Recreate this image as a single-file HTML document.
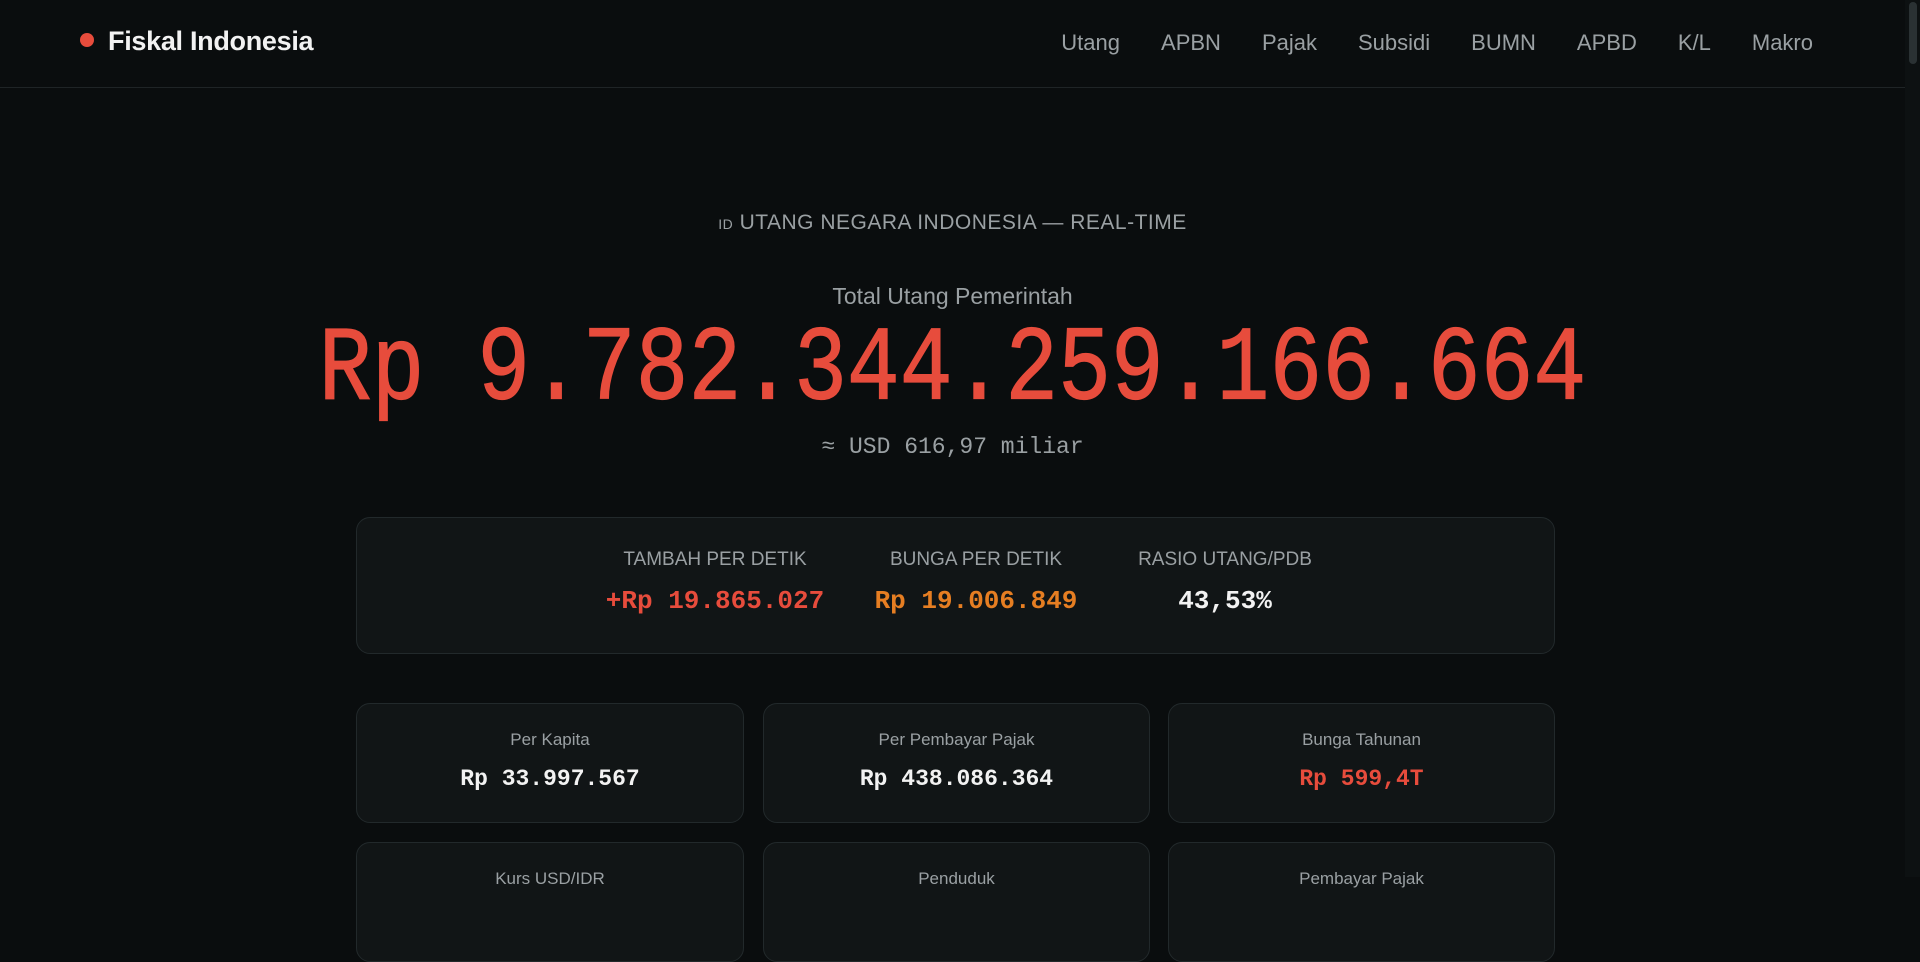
<!DOCTYPE html>
<html><head><meta charset="utf-8"><style>
*{margin:0;padding:0;box-sizing:border-box}
body{width:1920px;height:877px;overflow:hidden;background:#0a0d0e;font-family:"Liberation Sans",sans-serif;color:#e6e6e6;position:relative}
.nav{position:absolute;left:0;top:0;width:1905px;height:88px;border-bottom:1px solid #1f2426}
.logo{position:absolute;left:80px;top:26px;font-size:27px;font-weight:bold;color:#f2f2f2;letter-spacing:-0.3px}
.logo:before{content:"";display:inline-block;width:14px;height:14px;border-radius:50%;background:#e74c3c;margin-right:14px;vertical-align:3px}
.menu{position:absolute;right:92px;top:30px;font-size:22px;color:#9aa0a3}
.menu span{margin-left:41px}
.sb{position:absolute;right:0;top:0;width:15px;height:877px;background:#0d1112}
.sb div{position:absolute;left:4px;top:2px;width:8px;height:62px;border-radius:4px;background:#2a3133}
.c{position:absolute;left:0;width:1905px;text-align:center}
.mono{font-family:"Liberation Mono",monospace}
.box{position:absolute;background:#111516;border:1px solid #22292b;border-radius:14px}
.lab{position:absolute;text-align:center;font-size:19px;color:#9aa0a3}
.val{position:absolute;text-align:center;font-family:"Liberation Mono",monospace;font-weight:bold;font-size:26px}
</style></head><body>
<div class="nav"><div class="logo">Fiskal Indonesia</div>
<div class="menu"><span>Utang</span><span>APBN</span><span>Pajak</span><span>Subsidi</span><span>BUMN</span><span>APBD</span><span>K/L</span><span>Makro</span></div></div>
<div class="sb"><div></div></div>
<div class="c" style="top:211px;font-size:21px;color:#9aa0a3;letter-spacing:0.5px"><span style="font-size:14px">ID</span> UTANG NEGARA INDONESIA — REAL-TIME</div>
<div class="c" style="top:283px;font-size:23px;color:#9aa0a3">Total Utang Pemerintah</div>
<div class="c mono" style="top:322px;font-size:88px;line-height:100px;color:#e74c3c;transform:scaleY(1.2);-webkit-text-stroke:1px #e74c3c">Rp 9.782.344.259.166.664</div>
<div class="c mono" style="top:434px;font-size:23px;color:#9aa0a3">≈ USD 616,97 miliar</div>
<div class="box" style="left:356px;top:517px;width:1199px;height:137px"></div>
<div class="lab" style="left:595px;width:240px;top:549px">TAMBAH PER DETIK</div>
<div class="lab" style="left:856px;width:240px;top:549px">BUNGA PER DETIK</div>
<div class="lab" style="left:1105px;width:240px;top:549px">RASIO UTANG/PDB</div>
<div class="val" style="left:565px;width:300px;top:586px;color:#e74c3c">+Rp 19.865.027</div>
<div class="val" style="left:836px;width:280px;top:586px;color:#e67e22">Rp 19.006.849</div>
<div class="val" style="left:1125px;width:200px;top:586px;color:#f2f2f2">43,53%</div>
<div class="box" style="left:356px;top:703px;width:388px;height:120px"></div>
<div class="box" style="left:763px;top:703px;width:387px;height:120px"></div>
<div class="box" style="left:1168px;top:703px;width:387px;height:120px"></div>
<div class="lab" style="left:356px;width:388px;top:730px;font-size:17px">Per Kapita</div>
<div class="lab" style="left:763px;width:387px;top:730px;font-size:17px">Per Pembayar Pajak</div>
<div class="lab" style="left:1168px;width:387px;top:730px;font-size:17px">Bunga Tahunan</div>
<div class="val" style="left:356px;width:388px;top:766px;font-size:23px;color:#f2f2f2">Rp 33.997.567</div>
<div class="val" style="left:763px;width:387px;top:766px;font-size:23px;color:#f2f2f2">Rp 438.086.364</div>
<div class="val" style="left:1168px;width:387px;top:766px;font-size:23px;color:#e74c3c">Rp 599,4T</div>
<div class="box" style="left:356px;top:842px;width:388px;height:120px"></div>
<div class="box" style="left:763px;top:842px;width:387px;height:120px"></div>
<div class="box" style="left:1168px;top:842px;width:387px;height:120px"></div>
<div class="lab" style="left:356px;width:388px;top:869px;font-size:17px">Kurs USD/IDR</div>
<div class="lab" style="left:763px;width:387px;top:869px;font-size:17px">Penduduk</div>
<div class="lab" style="left:1168px;width:387px;top:869px;font-size:17px">Pembayar Pajak</div>
</body></html>
